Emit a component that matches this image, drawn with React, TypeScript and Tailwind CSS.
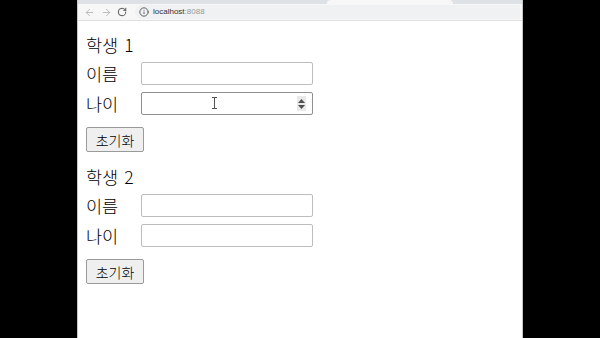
import { ArrowLeft, ArrowRight, RotateCw, Info } from "lucide-react";

const font = { fontFamily: '"Noto Sans CJK KR", "Noto Sans", sans-serif' };

const Field = ({ label, hovered }: { label: string; hovered?: boolean }) => (
  <div className="flex items-center h-[23px]">
    <span className="w-[55px] text-[17.5px] font-light leading-none text-black">{label}</span>
    <div
      className={`relative w-[172px] h-[23px] rounded-[2px] border bg-white ${
        hovered ? "border-[#8f8f8f]" : "border-[#bdbdbd]"
      }`}
    >
      {hovered && (
        <>
          <div className="absolute right-[6px] top-[3px] w-[9px] h-[15px] bg-[#e9e9e9] flex flex-col items-center justify-center gap-[2px]">
            <svg width="7" height="4" viewBox="0 0 7 4">
              <path d="M0 4 L3.5 0 L7 4 Z" fill="#505050" />
            </svg>
            <svg width="7" height="4" viewBox="0 0 7 4">
              <path d="M0 0 L3.5 4 L7 0 Z" fill="#505050" />
            </svg>
          </div>
          <svg className="absolute left-[69px] top-[4px]" width="7" height="12" viewBox="0 0 7 12">
            <path d="M1 0.5 H6 M3.5 0.5 V11.5 M1 11.5 H6" stroke="#555" strokeWidth="1" fill="none" />
          </svg>
        </>
      )}
    </div>
  </div>
);

const Student = ({ n, hovered }: { n: number; hovered?: boolean }) => (
  <div className="flex flex-col items-start">
    <h3 className="h-[24px] leading-[24px] text-[17.5px] font-light text-black flex">
      <span>학생</span>
      <span className="ml-[6px]">{n}</span>
    </h3>
    <div className="mt-[5px] flex flex-col gap-[7px]">
      <Field label="이름" />
      <Field label="나이" hovered={hovered} />
    </div>
    <button className="mt-[12px] w-[58px] h-[25px] rounded-[2px] border border-[#9a9a9a] bg-[#efefef] text-[14px] font-light leading-none text-black">
      초기화
    </button>
  </div>
);

export default function App() {
  return (
    <div className="w-[600px] h-[338px] bg-black flex overflow-hidden" style={font}>
      <div className="ml-[77px] w-[446px] h-full bg-white border-x border-[#c8c8c8] flex flex-col">
        <div className="h-[4px] bg-[#dee1e6] relative">
          <div className="absolute left-[249px] w-[126px] h-[4px] bg-[#f7f7f7] rounded-t-[4px]" />
        </div>
        <div className="h-[17px] bg-[#f7f7f7] flex items-center border-b border-[#e0e0e0] text-[#8a8a8a]">
          <ArrowLeft className="ml-[6px]" size={11} strokeWidth={1.8} color="#b0b0b0" />
          <ArrowRight className="ml-[6px]" size={11} strokeWidth={1.8} color="#b0b0b0" />
          <RotateCw className="ml-[5px]" size={10} strokeWidth={2.4} color="#555" />
          <div className="ml-[8px] flex-1 mr-[2px] h-[14px] rounded-l-full bg-[#eff1f2] flex items-center">
            <Info className="ml-[4px]" size={10} strokeWidth={2.2} color="#555" />
            <span className="ml-[4px] text-[8px] leading-none" style={{ fontFamily: '"Liberation Sans", sans-serif' }}>
              <span className="text-[#333]">localhost</span>
              <span className="text-[#999]">:8088</span>
            </span>
          </div>
        </div>
        <div className="pl-[8px] pt-[12px] flex flex-col gap-[13px]">
          <Student n={1} hovered />
          <Student n={2} />
        </div>
      </div>
    </div>
  );
}
